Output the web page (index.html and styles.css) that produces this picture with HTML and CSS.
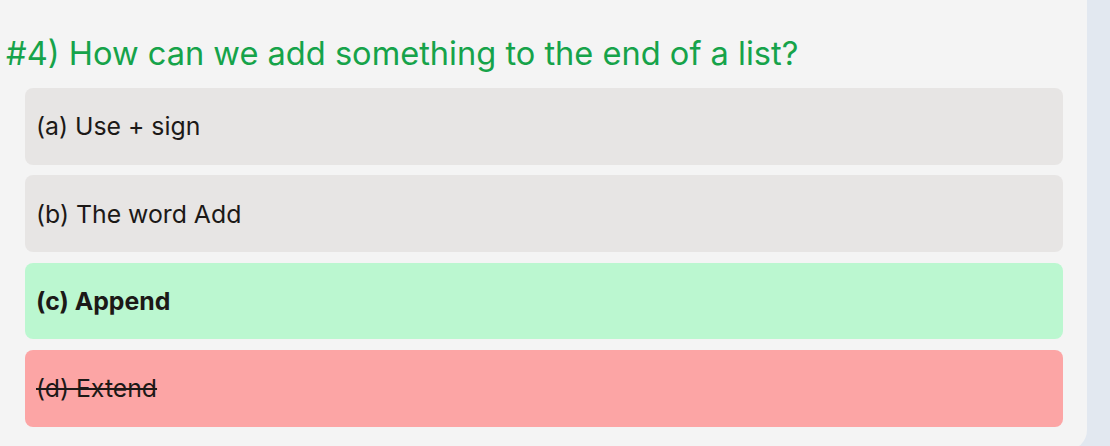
FILE: index.html
```html
<!DOCTYPE html>
<html>
<head>
<meta charset="utf-8">
<link rel="stylesheet" href="styles.css">
</head>
<body>
<div class="page">
  <main class="panel">
    <h2 class="question">#4) How can we add something to the end of a list?</h2>
    <ul class="options">
      <li class="option">(a) Use + sign</li>
      <li class="option">(b) The word Add</li>
      <li class="option correct">(c) Append</li>
      <li class="option wrong">(d) Extend</li>
    </ul>
  </main>
  <aside class="side"></aside>
</div>
</body>
</html>
```
FILE: styles.css
```css
html, body {
  margin: 0;
  padding: 0;
  background: #e2e8f0;
}
.page {
  display: flex;
  width: 1110px;
  height: 446px;
  overflow: hidden;
}
.panel {
  flex: none;
  width: 1087px;
  height: 450px;
  background: #f4f4f4;
  border-bottom-right-radius: 20px;
  font-family: Inter, "Noto Sans", sans-serif;
  box-sizing: border-box;
  padding: 30px 24px 0 6px;
}
.side {
  flex: 1;
}
.question {
  margin: 0 0 12px 0;
  font-weight: 400;
  font-size: 32.6px;
  line-height: 46px;
  color: #16a34a;
  white-space: nowrap;
}
.options {
  list-style: none;
  margin: 0;
  padding: 0 0 0 19px;
  display: flex;
  flex-direction: column;
  gap: 10.67px;
}
.option {
  background: #e7e5e4;
  border-radius: 8px;
  height: 76.67px;
  box-sizing: border-box;
  padding: 0 11px;
  display: flex;
  align-items: center;
  font-size: 24.8px;
  color: #1c1917;
}
.correct {
  background: #bbf7d0;
  font-weight: 700;
}
.wrong {
  background: #fca5a5;
  text-decoration: line-through;
}
```
